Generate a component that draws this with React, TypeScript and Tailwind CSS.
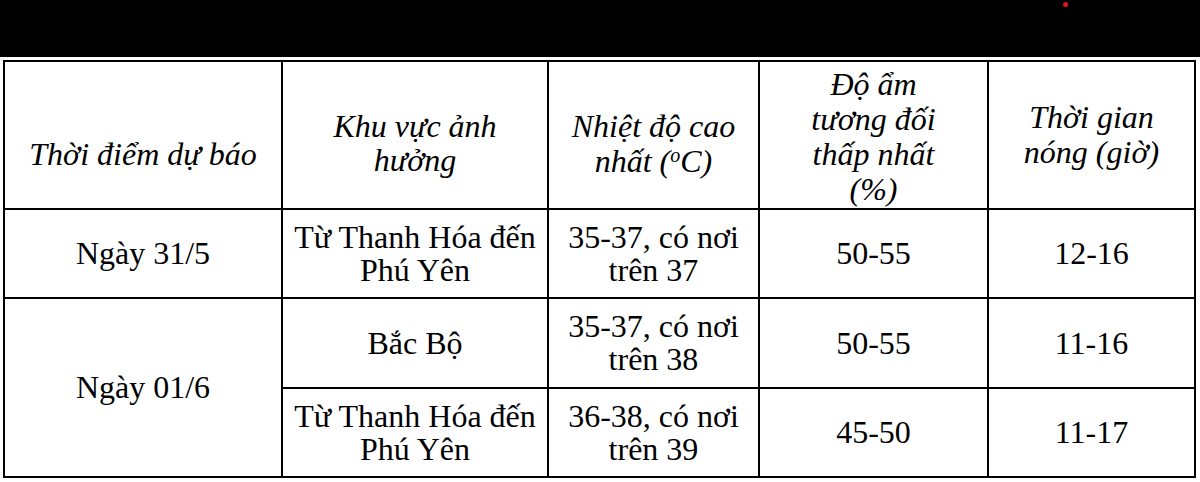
import type { ReactNode } from "react"

function Cell({ children, className = "" }: { children: ReactNode; className?: string }) {
  return (
    <div className={`flex items-center justify-center bg-white text-center ${className}`}>
      <div>{children}</div>
    </div>
  )
}

const rows = [
  { area: ["Từ Thanh Hóa đến", "Phú Yên"], temp: ["35-37, có nơi", "trên 37"], hum: "50-55", hours: "12-16" },
  { area: ["Bắc Bộ"], temp: ["35-37, có nơi", "trên 38"], hum: "50-55", hours: "11-16" },
  { area: ["Từ Thanh Hóa đến", "Phú Yên"], temp: ["36-38, có nơi", "trên 39"], hum: "45-50", hours: "11-17" },
]

function Lines({ lines }: { lines: string[] }) {
  return (
    <>
      {lines.map((l, i) => (
        <span key={i} className="block whitespace-nowrap">
          {l}
        </span>
      ))}
    </>
  )
}

export default function App() {
  return (
    <div className="relative h-[482px] w-[1200px] overflow-hidden bg-white font-serif text-black">
      <div className="[font-family:'Liberation_Serif','Times_New_Roman',serif]">
        <div className="h-[57px] w-full bg-black" />
        <span className="absolute left-[1063px] top-[2px] size-[5px] rounded-full bg-[#e3131b]" />

        <div className="ml-[3px] mt-[3px] w-[1193px] bg-black p-[2px]">
          <div className="grid grid-cols-[276px_264px_209px_227px_205px] grid-rows-[146px_87px_88px_87px] gap-[2px] text-[32px] leading-[33px]">
            {/* header */}
            <Cell className="pt-[38px] italic leading-[34px]">Thời điểm dự báo</Cell>
            <Cell className="pt-[16px] italic leading-[34px]">
              <Lines lines={["Khu vực ảnh", "hưởng"]} />
            </Cell>
            <Cell className="pt-[17px] italic leading-[35px]">
              <span className="block whitespace-nowrap">Nhiệt độ cao</span>
              <span className="block whitespace-nowrap">
                nhất (<sup className="text-[20px]">o</sup>C)
              </span>
            </Cell>
            <Cell className="pt-[4px] italic leading-[35px]">
              <Lines lines={["Độ ẩm", "tương đối", "thấp nhất", "(%)"]} />
            </Cell>
            <Cell className="italic leading-[35px]">
              <Lines lines={["Thời gian", "nóng (giờ)"]} />
            </Cell>

            {/* body */}
            <Cell>Ngày 31/5</Cell>
            <Cell>
              <Lines lines={rows[0].area} />
            </Cell>
            <Cell>
              <Lines lines={rows[0].temp} />
            </Cell>
            <Cell>{rows[0].hum}</Cell>
            <Cell>{rows[0].hours}</Cell>

            <Cell className="row-span-2">Ngày 01/6</Cell>
            {rows.slice(1).map((r, i) => (
              <div key={i} className="contents">
                <Cell>
                  <Lines lines={r.area} />
                </Cell>
                <Cell>
                  <Lines lines={r.temp} />
                </Cell>
                <Cell>{r.hum}</Cell>
                <Cell>{r.hours}</Cell>
              </div>
            ))}
          </div>
        </div>
      </div>
    </div>
  )
}
